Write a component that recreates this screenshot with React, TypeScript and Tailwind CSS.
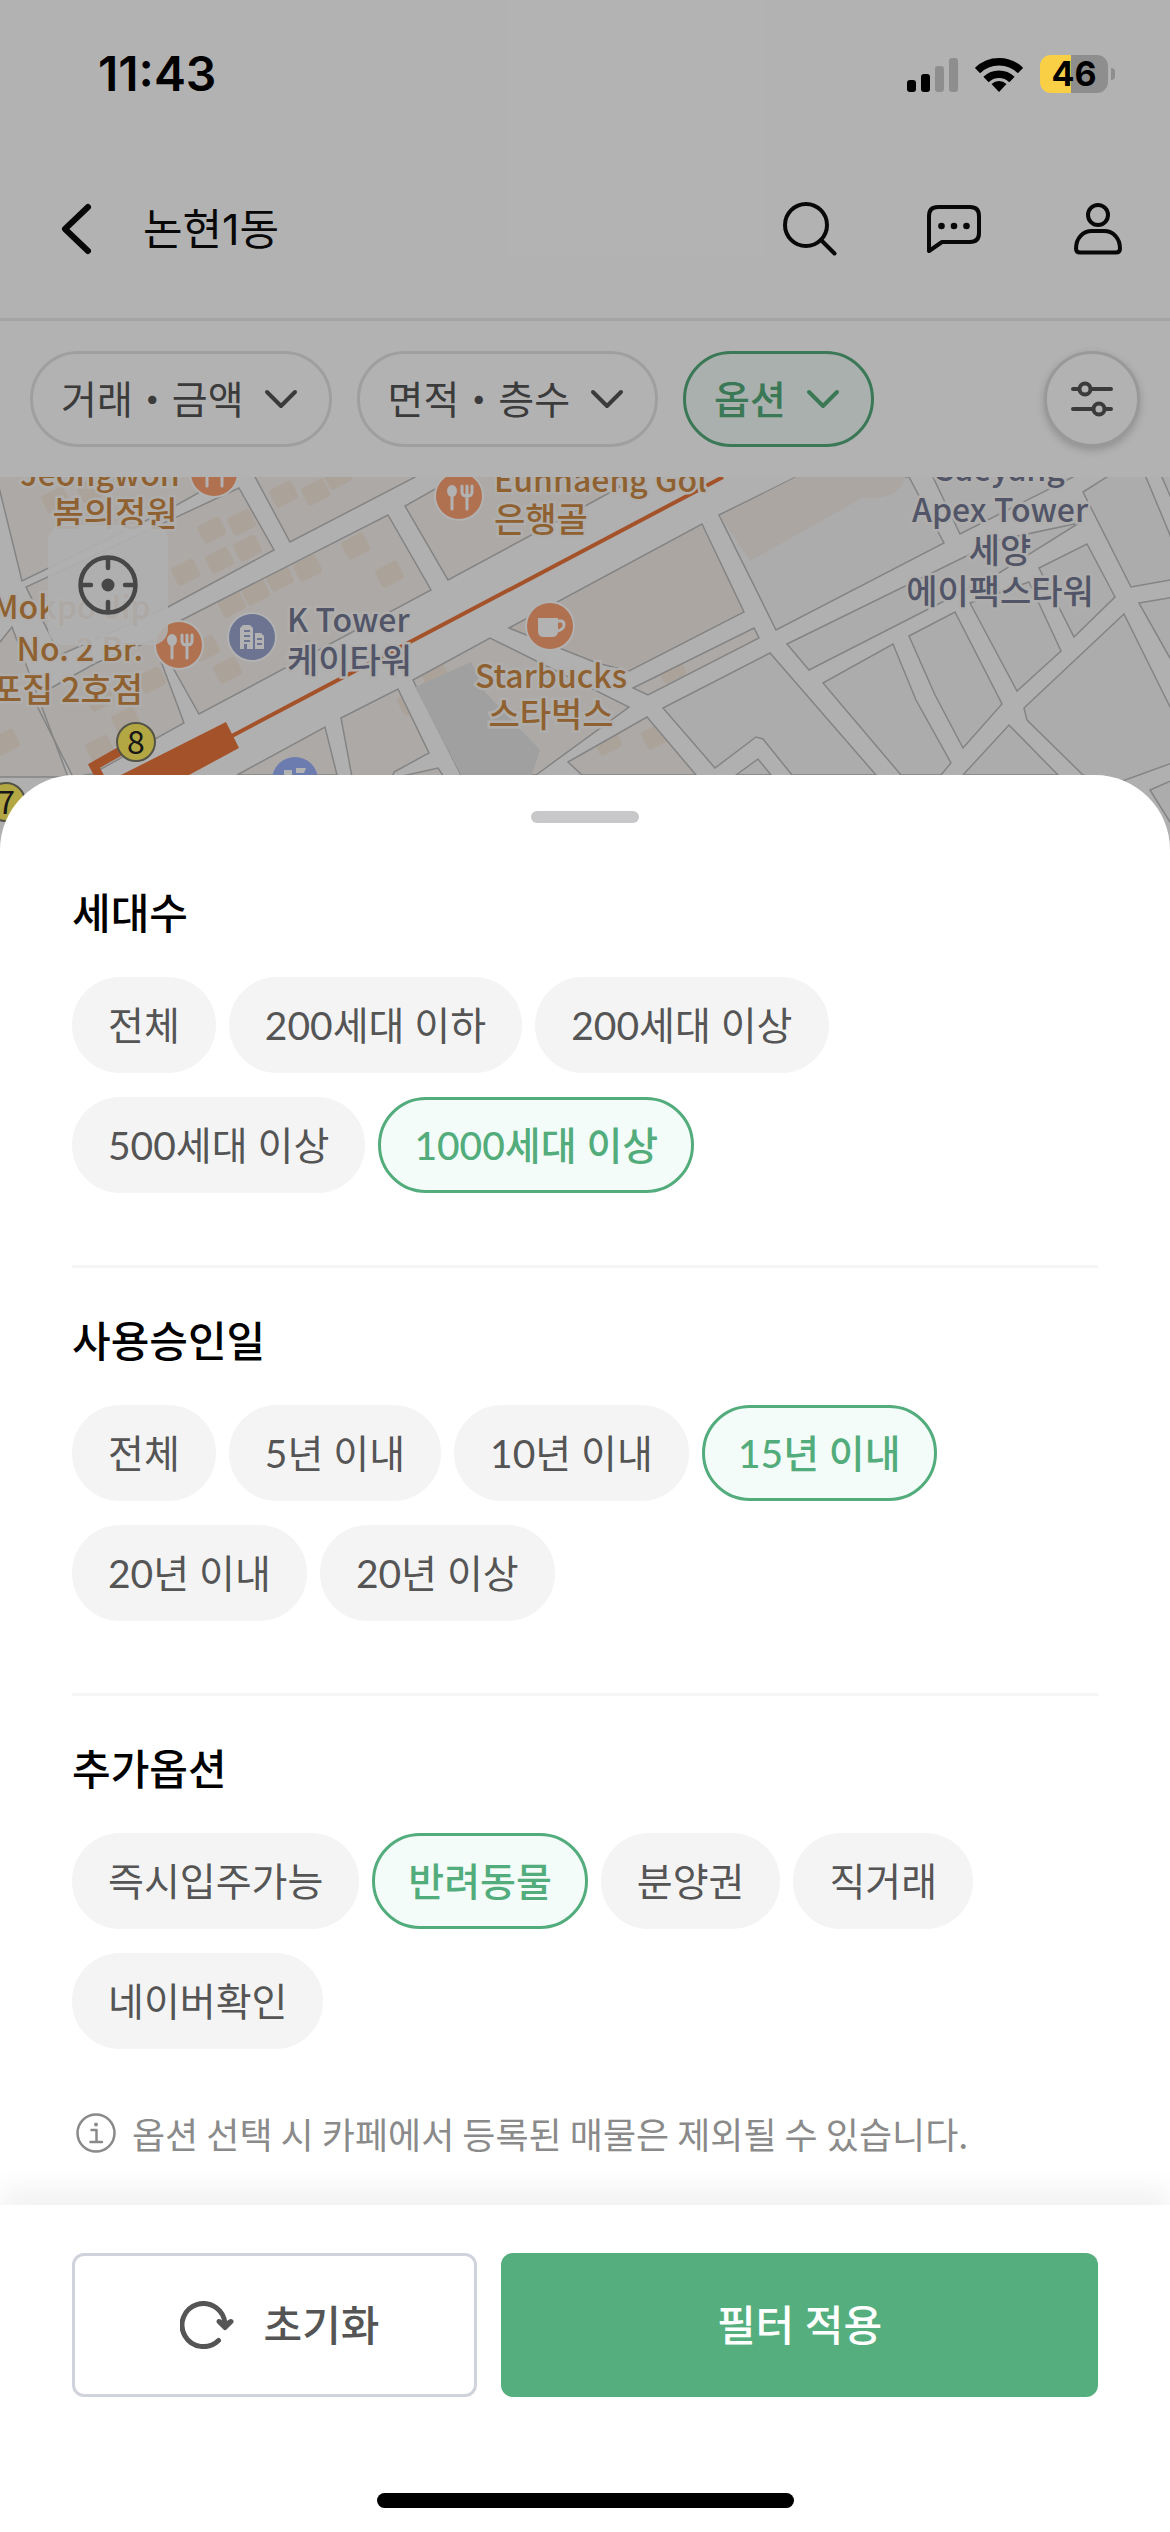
import React, { useState } from 'react';

type Section = {
    id: string;
    title: string;
    options: string[];
};

const sections: Section[] = [
    {
        id: 'households',
        title: '세대수',
        options: ['전체', '200세대 이하', '200세대 이상', '500세대 이상', '1000세대 이상'],
    },
    {
        id: 'approval',
        title: '사용승인일',
        options: ['전체', '5년 이내', '10년 이내', '15년 이내', '20년 이내', '20년 이상'],
    },
    {
        id: 'extra',
        title: '추가옵션',
        options: ['즉시입주가능', '반려동물', '분양권', '직거래', '네이버확인'],
    },
];

const defaults: Record<string, string> = {
    households: '1000세대 이상',
    approval: '15년 이내',
    extra: '반려동물',
};

// City blocks, drawn over the road colour
const plainBlocks = [
    '719,38 796,0 909,0 944,66 776,153',
    '663,231 770,176 876,298 792,298 763,262 756,260 715,291',
    '736,298 758,282 771,298',
    '787,167 999,63 1079,46 999,96 809,193',
    '909,159 955,135 1002,227 963,271 935,218',
    '823,206 893,167 916,223 951,286 941,298 901,298',
    '970,126 1029,105 1061,174 1017,214',
    '1039,91 1087,67 1115,120 1074,160',
    '1083,15 1110,-2 1145,-2 1175,70 1175,102 1131,110',
    '1161,-2 1175,-2 1175,30',
    '1139,126 1175,120 1175,190',
    '1024,231 1124,137 1175,240 1175,285 1117,306 1083,298 1027,243',
    '963,298 1009,248 1058,298',
    '932,-2 960,57 1077,-2',
    '1150,313 1175,302 1175,353',
];

const warmBlocks = [
    '-4,-2 22,104 168,33 230,-2',
    '239,11 274,73 168,130 60,178 26,110',
    '33,221 96,186 153,163 184,246 92,297 73,300',
    '168,150 388,38 431,113 199,237 159,166',
    '254,-2 290,65 419,-2',
    '405,29 448,103 587,28 620,10 608,-2 460,-2',
    '509,151 702,47 744,135 629,194 597,186',
    '413,203 490,161 629,230 536,298 461,298',
    '341,241 398,212 429,276 394,295 391,305 352,300',
    '237,298 325,250 337,298',
    '398,300 438,291 444,300',
    '568,285 647,240 696,298 582,298',
    '633,211 754,151 759,161 648,218',
    '-4,170 12,150 68,300 -4,300',
];

// x, y of small building footprints
const buildings = [
    [40, 20], [76, 10], [196, 50], [226, 42], [204, 80], [170, 92], [232, 68], [264, 98], [292, 88],
    [340, 66], [374, 94], [240, 112], [216, 124], [268, 14], [300, 12], [322, -4], [84, 218],
    [110, 240], [136, 200], [84, 268], [190, 168], [212, 190], [-10, 262], [592, 262], [656, 190],
    [640, 256], [396, 222], [420, 196],
];

function StatusBar() {
    return (
        <div className="relative z-10 flex h-[140px] items-center justify-between pl-[98px] pr-[55px] pt-2 text-black">
            <span className="font-['Inter',sans-serif] text-[48px] font-semibold leading-[56px]">11:43</span>
            <div className="flex items-center gap-[17px]">
                <svg width="51" height="36" viewBox="0 0 51 36" aria-label="신호 세기">
                    <rect x="0" y="24" width="9" height="12" rx="3" />
                    <rect x="14" y="18" width="9" height="18" rx="3" />
                    <rect x="28" y="10" width="9" height="26" rx="3" fill="#8e8e8e" />
                    <rect x="42" y="2" width="9" height="34" rx="3" fill="#8e8e8e" />
                </svg>
                <svg width="48" height="36" viewBox="0 0 48 36" aria-label="와이파이">
                    <g fill="none" stroke="currentColor" strokeWidth="7.5">
                        <path d="M2.5 14.5a30.5 30.5 0 0 1 43 0" />
                        <path d="M11 23.5a18.5 18.5 0 0 1 26 0" />
                    </g>
                    <path d="M24 36l-7.5-8a11 11 0 0 1 15 0z" />
                </svg>
                <div className="flex items-center gap-[3px]">
                    <div className="flex h-[38px] w-[68px] items-center justify-center rounded-[11px] bg-[linear-gradient(90deg,#f9d045_46%,#8e8e8e_46%)] font-['Inter',sans-serif] text-[34px] font-bold leading-[38px]">
                        46
                    </div>
                    <div className="h-[12px] w-[4px] rounded-r-full bg-[#8e8e8e]" />
                </div>
            </div>
        </div>
    );
}

function Chevron() {
    return (
        <svg width="34" height="20" viewBox="0 0 34 20" fill="none" stroke="currentColor" strokeWidth="4" strokeLinecap="round" strokeLinejoin="round">
            <path d="M3 3l14 14L31 3" />
        </svg>
    );
}

function FilterBar() {
    return (
        <div className="flex items-center justify-between bg-white p-[30px]">
            <div className="flex gap-[25px] text-[39px] leading-[48px] text-[#555]">
                {['거래・금액', '면적・층수'].map((label) => (
                    <button key={label} className="flex h-24 items-center gap-5 rounded-full border-3 border-[#e4e4e4] pl-7 pr-[31px]">
                        {label}
                        <Chevron />
                    </button>
                ))}
                <button className="flex h-24 items-center gap-5 rounded-full border-3 border-[#53ac7c] bg-[#f3fcf8] pl-7 pr-[31px] font-medium text-[#53ac7c]">
                    옵션
                    <Chevron />
                </button>
            </div>
            <button aria-label="전체 필터" className="flex size-24 items-center justify-center rounded-full border-3 border-[#dcdcdc] bg-white text-[#555] shadow-[0_3px_9px_rgba(0,0,0,0.2)]">
                <svg width="42" height="36" viewBox="0 0 42 36" fill="none" stroke="currentColor" strokeWidth="4" strokeLinecap="round">
                    <path d="M2 8h6M20 8h20M2 28h20M34 28h6" />
                    <circle cx="14" cy="8" r="5.5" />
                    <circle cx="28" cy="28" r="5.5" />
                </svg>
            </button>
        </div>
    );
}

function FoodPin({ x, y }: { x: number; y: number }) {
    return (
        <g transform={`translate(${x} ${y})`}>
            <circle r="24" fill="#fca275" stroke="#fff" strokeWidth="2" />
            <g fill="none" stroke="#fff" strokeWidth="3" strokeLinecap="round">
                <path d="M-7 -2V13M8 -2V13M3 -10v6q0 4 5 4t5-4v-6M8 -10V0" />
            </g>
            <ellipse cx="-7" cy="-5" rx="5" ry="6" fill="#fff" />
        </g>
    );
}

function MapView() {
    return (
        <div className="relative h-[373px] overflow-hidden bg-[#fdfdfd]">
            <svg className="h-full w-full" viewBox="0 0 1170 373" preserveAspectRatio="xMidYMin slice" aria-label="논현1동 지도">
                <clipPath id="warm">
                    {warmBlocks.map((points) => (
                        <polygon key={points} points={points} />
                    ))}
                </clipPath>
                <g>
                    {warmBlocks.map((points) => (
                        <polygon key={points} points={points} fill="#f7f3ef" />
                    ))}
                </g>
                <polygon points="511,152 701,49 743,134 629,192 597,184" fill="#f5eee9" />
                <g fill="#f5e8dc" clipPath="url(#warm)">
                    {buildings.map(([x, y]) => (
                        <rect key={`${x}-${y}`} width="25" height="20" rx="4" transform={`translate(${x} ${y}) rotate(-27)`} />
                    ))}
                </g>
                <g stroke="#bdbdbd" strokeWidth="1.5">
                    {plainBlocks.map((points) => (
                        <polygon key={points} points={points} fill="#f7f7f7" />
                    ))}
                    {warmBlocks.map((points) => (
                        <polygon key={points} points={points} fill="none" />
                    ))}
                </g>
                <path d="M720 39L796 0H905Q900 24 864 20L750 84Z" fill="#f5eee9" />
                <polygon points="415,210 471,185 486,216 540,273 532,298 461,298" fill="#e6e6e6" />

                {/* Subway line and station */}
                <path d="M230 260L723 0" stroke="#ea763d" strokeWidth="4" />
                <polygon points="226,245 239,271 189,298 121,298" fill="#ea763d" />
                <path d="M124 272L94 289L102 304" fill="none" stroke="#ea763d" strokeWidth="9" />
                <g stroke="#776" strokeWidth="2" fill="#fff060">
                    <circle cx="136" cy="265" r="19" />
                    <circle cx="6" cy="325" r="19" />
                </g>
                <g className="fill-[#222] text-[32px]" fontFamily="'Noto Sans CJK KR', sans-serif" textAnchor="middle">
                    <text x="136" y="277">8</text>
                    <text x="6" y="337">7</text>
                </g>

                <FoodPin x={214} y={-4} />
                <FoodPin x={459} y={19} />
                <FoodPin x={179} y={168} />
                <g transform="translate(550 149)">
                    <circle r="24" fill="#fca275" stroke="#fff" strokeWidth="2" />
                    <path d="M-12 -8H8V5q0 6-6 6H-6q-6 0-6-6Z" fill="#fff" />
                    <path d="M8 -5h3q3 0 3 4t-6 6" fill="none" stroke="#fff" strokeWidth="3" />
                </g>
                <g transform="translate(252 160)">
                    <circle r="24" fill="#9ba7d2" stroke="#fff" strokeWidth="2" />
                    <path d="M-12 12V-9l3-3h7l3 3V12H-5V7H-8v5ZM3 12V-4H9l3 3V12Z" fill="#fff" />
                    <path d="M-8 -6h6M-8 -1h6M-8 4h6M5 2h5M5 7h5" stroke="#9ba7d2" strokeWidth="2" />
                </g>
                <circle cx="295" cy="303" r="23" fill="#9db2fa" />
                <path d="M284 293h8v5h-8zM296 291h10l-2 5h-8z" fill="#fff" />

                <g className="font-medium" fontFamily="'Noto Sans CJK KR', sans-serif" stroke="#fbfaf8" strokeWidth="5" paintOrder="stroke">
                    <g className="text-[32px]" fill="#cf8c45">
                        <text x="100" y="9" textAnchor="middle">Jeongwon</text>
                        <text x="494" y="15">Eunhaeng Gol</text>
                        <text x="-8" y="142">Mokpo Jip</text>
                        <text x="143" y="184" textAnchor="end">No. 2 Br.</text>
                        <text x="551" y="211" textAnchor="middle">Starbucks</text>
                    </g>
                    <g className="text-[34px]" fill="#cf8c45">
                        <text x="115" y="49" textAnchor="middle">봄의정원</text>
                        <text x="494" y="55">은행골</text>
                        <text x="143" y="225" textAnchor="end">목포집 2호점</text>
                        <text x="551" y="250" textAnchor="middle">스타벅스</text>
                    </g>
                    <g className="text-[32px]" fill="#757a94">
                        <text x="287" y="155">K Tower</text>
                        <text x="1000" y="4" textAnchor="middle">Saeyang</text>
                        <text x="1000" y="45" textAnchor="middle">Apex Tower</text>
                    </g>
                    <g className="text-[34px]" fill="#757a94">
                        <text x="287" y="196">케이타워</text>
                        <text x="1000" y="86" textAnchor="middle">세양</text>
                        <text x="1000" y="127" textAnchor="middle">에이팩스타워</text>
                    </g>
                </g>
            </svg>
            <button aria-label="현재 위치" className="absolute left-12 top-12 flex size-[120px] items-center justify-center rounded-2xl bg-[#fcfcfc]/90 text-[#666]">
                <svg width="60" height="60" viewBox="0 0 60 60" fill="none" stroke="currentColor" strokeWidth="4.5" strokeLinecap="round">
                    <circle cx="30" cy="30" r="27.5" />
                    <path d="M30 4v9M30 47v9M4 30h9M47 30h9" />
                    <circle cx="30" cy="30" r="6.5" fill="currentColor" stroke="none" />
                </svg>
            </button>
        </div>
    );
}

function Header() {
    return (
        <header className="flex h-[181px] items-center justify-between border-b-3 border-[#ececec] px-[45px] text-[#0c0c0c]">
            <div className="flex items-center gap-[38px]">
                <button aria-label="뒤로">
                    <svg width="60" height="54" viewBox="0 0 60 54" fill="none" stroke="currentColor" strokeWidth="6" strokeLinecap="round" strokeLinejoin="round">
                        <path d="M43 5L20 27l23 22" />
                    </svg>
                </button>
                <h1 className="font-['Inter','Noto_Sans_CJK_KR',sans-serif] text-[43px] leading-[54px]">논현1동</h1>
            </div>
            <div className="flex items-center gap-[90px]">
                <button aria-label="검색">
                    <svg width="54" height="54" viewBox="0 0 54 54" fill="none" stroke="currentColor" strokeWidth="4" strokeLinecap="round">
                        <circle cx="23" cy="23" r="21" />
                        <path d="M38 38l13.5 13.5" />
                    </svg>
                </button>
                <button aria-label="채팅">
                    <svg width="54" height="54" viewBox="0 0 54 54" fill="none" stroke="currentColor" strokeWidth="4" strokeLinejoin="round">
                        <path d="M2 49V14q0-9 9-9H43q9 0 9 9V31q0 9-9 9H15Z" />
                        <g fill="currentColor" stroke="none">
                            <circle cx="14.5" cy="24" r="3.3" />
                            <circle cx="27" cy="24" r="3.3" />
                            <circle cx="39.5" cy="24" r="3.3" />
                        </g>
                    </svg>
                </button>
                <button aria-label="내 정보">
                    <svg width="54" height="54" viewBox="0 0 54 54" fill="none" stroke="currentColor" strokeWidth="4">
                        <circle cx="27" cy="13" r="10" />
                        <path d="M9 50.5h36q4 0 4-4C49 36 42 29 33 29H21C12 29 5 36 5 46.5q0 4 4 4Z" />
                    </svg>
                </button>
            </div>
        </header>
    );
}

export default function App() {
    const [selected, setSelected] = useState(defaults);

    return (
        <div className="flex min-h-screen flex-col bg-white font-['Lato','Noto_Sans_CJK_KR',sans-serif]">
            {/* Screen behind the sheet */}
            <div className="relative">
                <StatusBar />
                <Header />
                <FilterBar />
                <MapView />
                <div className="absolute inset-0 bg-black/30" />
            </div>

            {/* Filter sheet */}
            <main className="relative z-20 -mt-[75px] flex grow flex-col rounded-t-[75px] bg-white">
                <div className="flex h-[65px] justify-center pt-9">
                    <div className="h-3 w-[108px] rounded-full bg-[#c8c8ca]" />
                </div>

                <div className="grow px-[72px] pb-12">
                    {sections.map((section) => (
                        <section key={section.id} className="border-b-3 border-[#f6f6f6] pb-[72px] pt-12 last-of-type:border-b-0 last-of-type:pb-0">
                            <h2 className="mb-[39px] text-[42px] font-medium leading-[50px] text-black">{section.title}</h2>
                            <div className="flex flex-wrap gap-x-[13px] gap-y-6">
                                {section.options.map((option) => {
                                    const active = selected[section.id] === option;
                                    return (
                                        <button
                                            key={option}
                                            aria-pressed={active}
                                            onClick={() => setSelected({ ...selected, [section.id]: option })}
                                            className={`h-24 rounded-full border-3 px-[33px] text-[39px] leading-[48px] ${
                                                active
                                                    ? 'border-[#53ac7c] bg-[#f3fcf8] font-medium text-[#53ac7c]'
                                                    : 'border-[#f4f4f4] bg-[#f4f4f4] text-[#555]'
                                            }`}
                                        >
                                            {option}
                                        </button>
                                    );
                                })}
                            </div>
                        </section>
                    ))}

                    <p className="flex items-center gap-4 pl-1 pt-[60px] font-['Noto_Sans_CJK_KR',sans-serif] text-[36px] leading-[48px] text-[#8a8a8a]">
                        <svg width="40" height="40" viewBox="0 0 40 40" fill="none" stroke="currentColor" strokeWidth="2.5" strokeLinecap="round" strokeLinejoin="round">
                            <circle cx="20" cy="20" r="18.5" />
                            <path d="M15.5 17H20.5V29M14.5 29H26" />
                            <circle cx="20" cy="11.5" r="2" fill="currentColor" stroke="none" />
                        </svg>
                        옵션 선택 시 카페에서 등록된 매물은 제외될 수 있습니다.
                    </p>
                </div>

                <footer className="bg-white px-[72px] pb-6 pt-12 shadow-[0_-18px_24px_rgba(0,0,0,0.05)]">
                    <div className="flex h-36 gap-6 text-[42px] font-medium leading-[54px]">
                        <button
                            onClick={() => setSelected(defaults)}
                            className="flex w-[405px] items-center justify-center gap-[30px] rounded-xl border-3 border-[#d0d3dc] pl-[10px] text-[#555]"
                        >
                            <svg width="54" height="48" viewBox="0 0 54 48" fill="none" stroke="currentColor" strokeWidth="5" strokeLinecap="round" strokeLinejoin="round">
                                <path d="M45 23A21.5 21.5 0 1 0 38.5 39.5" />
                                <path d="M39 20.5L45 26.5L51 20.5L45 24Z" fill="currentColor" />
                            </svg>
                            초기화
                        </button>
                        <button className="grow rounded-xl bg-[#55ae7d] text-white">필터 적용</button>
                    </div>
                    <div className="mx-auto mt-24 h-[15px] w-[417px] rounded-full bg-black" />
                </footer>
            </main>
        </div>
    );
}
